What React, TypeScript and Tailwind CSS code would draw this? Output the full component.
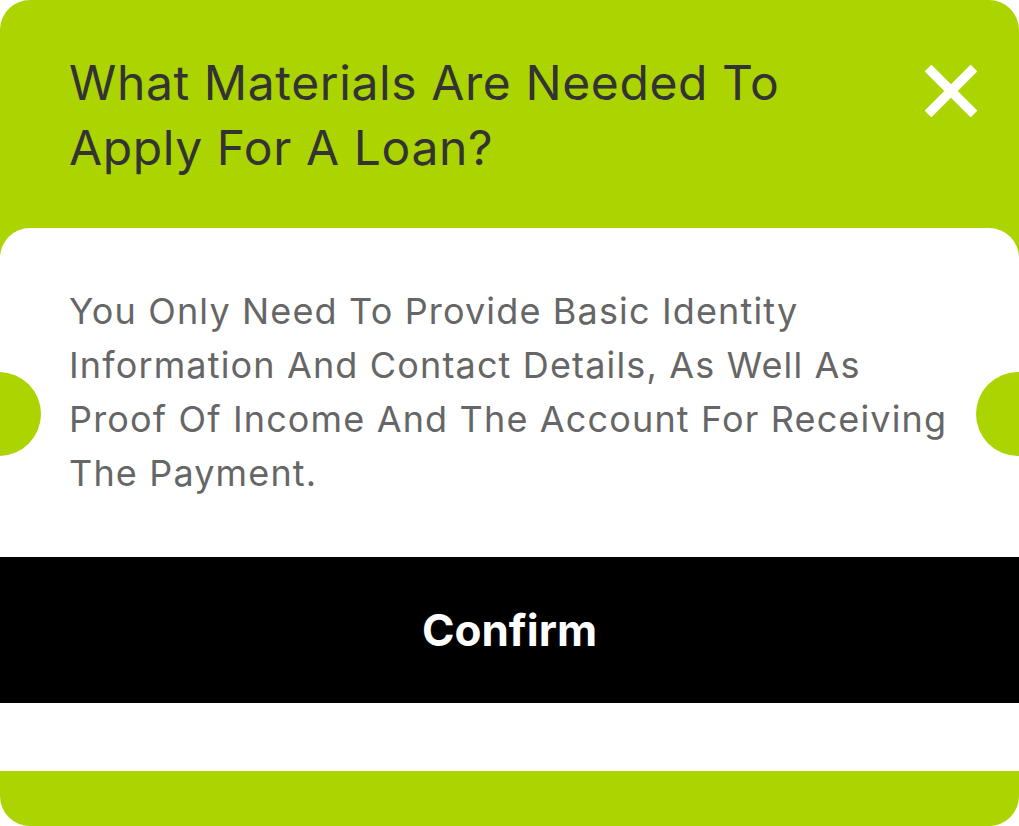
export default function App() {
  return (
    <div className="relative w-[1019px] h-[826px] bg-[#acd400] rounded-[30px] overflow-hidden flex flex-col font-['Inter',sans-serif]">
      {/* header */}
      <div className="h-[228px] shrink-0 flex justify-between pl-[69px] pr-[42px] pt-[50px]">
        <h2 className="max-w-[780px] text-[48px] leading-[65px] tracking-[0.6px] font-normal text-[#333333]">
          What Materials Are Needed To Apply For A Loan?
        </h2>
        <button className="mt-[15px] w-[52px] h-[52px] shrink-0" aria-label="Close">
          <svg viewBox="0 0 52 52" width="52" height="52" fill="none">
            <path d="M3 3 L49 49 M49 3 L3 49" stroke="#ffffff" strokeWidth="9.5" />
          </svg>
        </button>
      </div>

      {/* body */}
      <div className="bg-white rounded-t-[30px] flex flex-col">
        <p className="pl-[69px] pr-[60px] pt-[56px] pb-[57px] text-[36px] leading-[54px] tracking-[1.15px] text-[#666666]">
          You Only Need To Provide Basic Identity Information And Contact Details, As Well As Proof Of Income And The Account For Receiving The Payment.
        </p>
        <button className="h-[146px] w-full bg-black text-white text-[44px] font-bold flex items-center justify-center">
          Confirm
        </button>
        <div className="h-[68px]" />
      </div>

      {/* ticket notches */}
      <div className="absolute left-[-43px] top-[372px] w-[84px] h-[84px] rounded-full bg-[#acd400]" />
      <div className="absolute right-[-41px] top-[372px] w-[84px] h-[84px] rounded-full bg-[#acd400]" />
    </div>
  );
}
